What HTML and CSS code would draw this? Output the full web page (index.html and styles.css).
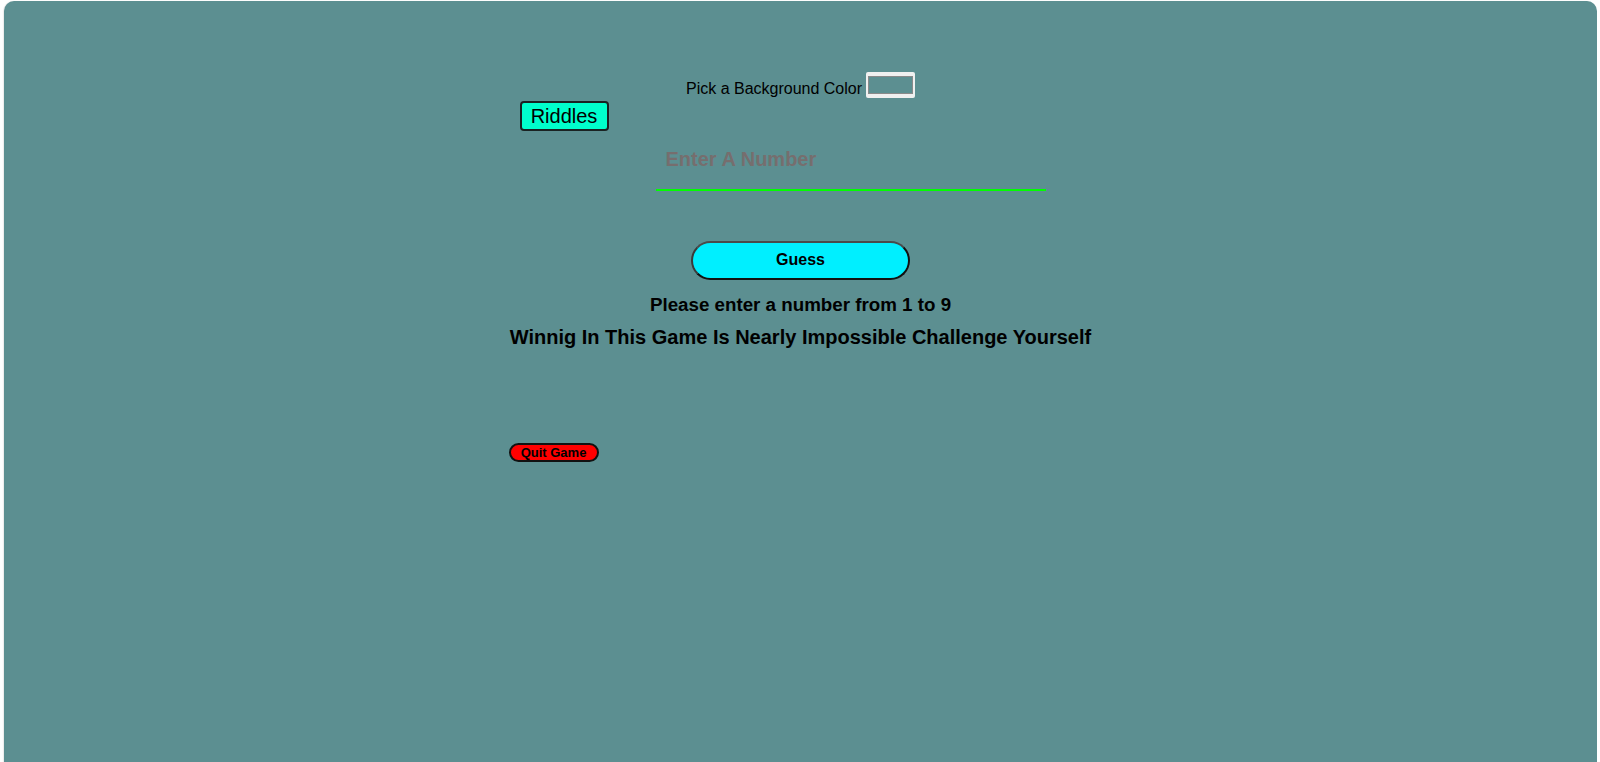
FILE: index.html
```html
<!DOCTYPE html>
<html lang="en">
<head>
<meta charset="utf-8">
<title>Guess The Number</title>
<link rel="stylesheet" href="styles.css">
</head>
<body>
<main class="app">
  <div class="wrap">
    <div class="picker">
      <label class="picker-label" for="bg">Pick a Background Color</label>
      <input class="picker-input" id="bg" type="color" value="#5c8f91">
    </div>
    <button class="riddles" type="button">Riddles</button>
    <input class="number" type="text" placeholder="Enter A Number">
    <button class="guess" type="button">Guess</button>
    <p class="hint">Please enter a number from 1 to 9</p>
    <h3 class="challenge">Winnig In This Game Is Nearly Impossible Challenge Yourself</h3>
    <button class="quit" type="button">Quit Game</button>
  </div>
</main>
</body>
</html>
```
FILE: styles.css
```css
html, body {
  margin: 0;
  padding: 0;
  background: #ffffff;
  height: 100%;
  overflow: hidden;
}

body {
  padding: 1px 3px 0 4px;
  box-sizing: border-box;
  font-family: "Liberation Sans", Arial, sans-serif;
}

.app {
  background: #5c8f91;
  border-radius: 10px 10px 0 0;
  min-height: 800px;
  box-shadow: -1px 0 1px rgba(0, 0, 0, 0.08);
  padding-top: 71px;
}

.wrap {
  width: 600px;
  margin: 0 auto;
  display: flex;
  flex-direction: column;
  align-items: flex-start;
}

.picker {
  align-self: center;
  display: flex;
  align-items: flex-end;
  gap: 4px;
  height: 26px;
}

.picker-label {
  font-size: 16px;
  line-height: 18px;
  color: #000;
  padding-bottom: 0;
}

.picker-input {
  -webkit-appearance: none;
  appearance: none;
  width: 49px;
  height: 26px;
  box-sizing: border-box;
  border: none;
  border-radius: 2px;
  padding: 4px 2px;
  margin: 0;
  background: #f0f0f0;
  cursor: pointer;
}

.picker-input::-webkit-color-swatch-wrapper {
  padding: 0;
}

.picker-input::-webkit-color-swatch {
  border: 1px solid #8a8a8a;
  border-radius: 0;
}

.riddles {
  margin: 3px 0 0 19px;
  width: 89px;
  height: 30px;
  box-sizing: border-box;
  background: #00ffcc;
  border: 2px solid #1a2222;
  border-radius: 4px;
  font-family: "Liberation Sans", Arial, sans-serif;
  font-size: 20px;
  color: #000;
  padding: 0;
  line-height: 24px;
}

.number {
  margin: 0 0 0 155px;
  width: 390px;
  height: 60px;
  box-sizing: border-box;
  background: transparent;
  border: none;
  border-bottom: 2px solid #00ff00;
  padding: 0 10px 2px;
  font-family: "Liberation Sans", Arial, sans-serif;
  font-size: 20px;
  font-weight: bold;
  color: #000;
  outline: none;
}

.number::placeholder {
  color: #766e6e;
}

.guess {
  align-self: center;
  margin-top: 50px;
  width: 219px;
  height: 39px;
  box-sizing: border-box;
  background: #00efff;
  border: 2px solid #111;
  border-top-color: #4a4a4a;
  border-left-color: #3a3a3a;
  border-radius: 20px;
  font-family: "Liberation Sans", Arial, sans-serif;
  font-size: 16px;
  font-weight: bold;
  color: #000;
  padding: 0 0 1px;
}

.hint {
  align-self: center;
  margin: 14px 0 0;
  font-size: 18.75px;
  line-height: 22px;
  font-weight: bold;
  color: #000;
}

.challenge {
  align-self: center;
  margin: 9px 0 0;
  font-size: 20px;
  line-height: 24px;
  font-weight: bold;
  color: #000;
}

.quit {
  margin: 94px 0 0 8px;
  width: 90px;
  height: 19px;
  box-sizing: border-box;
  background: #ff0000;
  border: 2px solid #111;
  border-radius: 10px;
  font-family: "Liberation Sans", Arial, sans-serif;
  font-size: 13px;
  font-weight: bold;
  line-height: 13px;
  color: #000;
  padding: 0;
}
```
